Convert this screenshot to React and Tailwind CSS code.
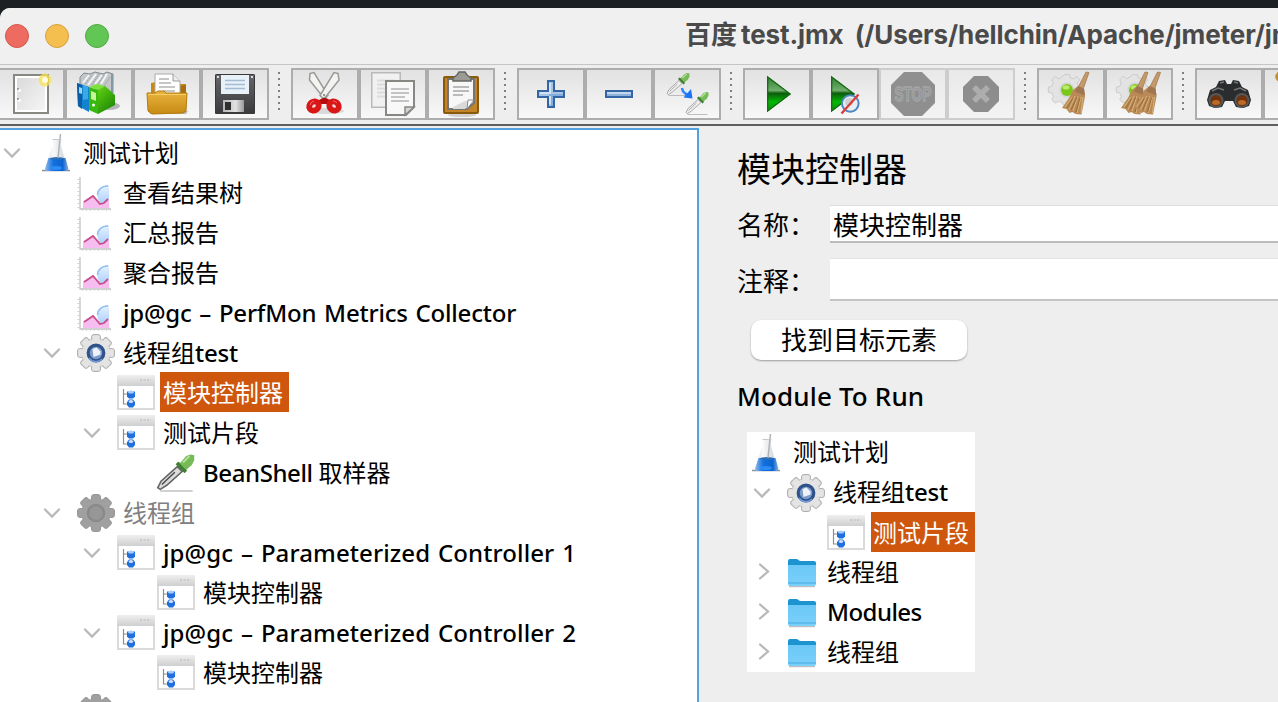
import React from "react";

const UI = "font-['Noto_Sans','Noto_Sans_CJK_SC',sans-serif]";

/* ---------- toolbar icons (64 x 48 canvas) ---------- */

const Canvas = ({ children }) => (
  <svg width="64" height="48" viewBox="0 0 64 48" className="block shrink-0">{children}</svg>
);

const NewIcon = () => (
  <Canvas>
    <rect x="15" y="5" width="34" height="38" fill="#fff" stroke="#888882" strokeWidth="2" />
    <rect x="18" y="8" width="28" height="32" fill="url(#paper)" />
    <path d="M18 18h2v2h-2zM18 28h2v2h-2z" fill="#999" />
    <circle cx="20.500" cy="20.500" r="1.500" fill="#fff" />
    <circle cx="20.500" cy="30.500" r="1.500" fill="#fff" />
    <circle cx="46" cy="10" r="6.500" fill="#f7e34f" opacity="0.75" />
    <circle cx="46" cy="10" r="3" fill="#fffbe0" />
  </Canvas>
);

const TemplatesIcon = () => (
  <Canvas>
    <ellipse cx="42" cy="36" rx="11" ry="4" fill="#777" opacity="0.5" />
    <path d="M13 7l4-4 6 1 5-2 8 2 4-2 6 2v19l-14-4-10 2-9-5z" fill="#c3c7ca" stroke="#84898c" strokeWidth="1" />
    <path d="M16 13l6-8M21 15l8-11M28 14l7-9M34 14l6-10" stroke="#f2f4f5" strokeWidth="2" />
    <path d="M18 14l7-9M25 15l7-11M31 14l6-9M37 16l6-9" stroke="#9a9fa2" strokeWidth="1" strokeDasharray="2 1" />
    <path d="M44 4l2 1v18l-2-1z" fill="#8499a6" />
    <path d="M10 13l12 4v25l-11-6z" fill="#1483cf" />
    <path d="M10 13l5 2v24l-4-3z" fill="#0b5ea5" />
    <path d="M12 17l3 1v6l-3-1z" fill="#9fd8f5" />
    <path d="M16 15l5 2v12l-5 1z" fill="#39a9e8" />
    <path d="M22 17l9 3v24l-9-4z" fill="#38b90f" />
    <path d="M24 21l5 2v8l-5-2z" fill="#c6f59c" />
    <circle cx="26.500" cy="35" r="1.500" fill="#fff" />
    <path d="M22 17l8-3 8 2-7 4z" fill="#7ee23c" />
    <path d="M31 20l7-4 10 9v10l-17 9z" fill="url(#green)" />
  </Canvas>
);

const OpenIcon = () => (
  <Canvas>
    <path d="M15 44h36l2-3H14z" fill="#777" opacity="0.5" />
    <path d="M16 13l5-1v2h30v26H16z" fill="#c98a12" />
    <path d="M45 16l6-1v22h-6z" fill="#a8700a" />
    <path d="M20 4h18l7 7v14H20z" fill="#fff" stroke="#aaa" />
    <path d="M38 4v7h7" fill="#ececec" stroke="#999" />
    <path d="M24 9h10M24 13h12M24 17h16M28 21h12" stroke="#b4b4b4" strokeWidth="1.500" />
    <path d="M12 23h8l3-2h6l2 2h21l-1 18-3 2-31 1-4-3z" fill="url(#gold)" stroke="#b57a0c" strokeWidth="1" />
    <path d="M13 24.500h38" stroke="#f5ce69" strokeWidth="1" />
  </Canvas>
);

const SaveIcon = () => (
  <Canvas>
    <rect x="12" y="4" width="40" height="40" rx="1.500" fill="url(#dark)" />
    <rect x="12.500" y="4.500" width="39" height="39" rx="1" fill="none" stroke="#39393b" />
    <rect x="18" y="5" width="28" height="19" fill="#e8f0f8" />
    <path d="M22 10.500h20M22 14.500h20M22 18.500h20" stroke="#a3bcd3" strokeWidth="1.500" />
    <rect x="14" y="6" width="2" height="2" fill="#ddd" />
    <rect x="48" y="6" width="2" height="2" fill="#ddd" />
    <rect x="20" y="30" width="21" height="12" fill="url(#steel)" />
    <rect x="22" y="32" width="6" height="8" fill="#2e2e30" />
  </Canvas>
);

const CutIcon = () => (
  <Canvas>
    <ellipse cx="33" cy="41" rx="18" ry="3" fill="#999" opacity="0.3" />
    <path d="M17 3.500l4-1 14 23-3 3-2-1.500L16.500 10z" fill="#f3f3f1" stroke="#999b96" strokeWidth="1.500" />
    <path d="M45 3.500l-4-1-14 23 3 3 2.500-1.500L46 10z" fill="#f3f3f1" stroke="#999b96" strokeWidth="1.500" />
    <circle cx="31" cy="25" r="1" fill="#777" />
    <path d="M24 31l6-3h3l6 3 1 3H23z" fill="#b50d0d" />
    <ellipse cx="21" cy="36" rx="5" ry="4.300" fill="#f3d5d5" stroke="#d91717" strokeWidth="5.800" transform="rotate(-35 21 36)" />
    <ellipse cx="41" cy="36" rx="5" ry="4.300" fill="#f3d5d5" stroke="#d91717" strokeWidth="5.800" transform="rotate(35 41 36)" />
    <path d="M17 35a5 5 0 014-4M40 31a5 5 0 014 2" stroke="#f06a6a" fill="none" />
  </Canvas>
);

const CopyIcon = () => (
  <Canvas>
    <rect x="10.750" y="2.750" width="28.500" height="34.500" fill="#f1f1f1" stroke="#b9b9b7" strokeWidth="1.500" />
    <path d="M16 10.500h18M16 14.500h18M16 18.500h10M16 22.500h10M16 26.500h10" stroke="#dcdcdc" strokeWidth="2" />
    <path d="M25 11h28v26l-8 8H25z" fill="#f8f8f8" stroke="#868884" strokeWidth="2" />
    <path d="M30 19h18M30 23h18M30 27h14M30 31h18" stroke="#c4c4c4" strokeWidth="2" />
    <path d="M53 37h-9v8z" fill="#d5d6d3" stroke="#868884" strokeWidth="1.500" />
  </Canvas>
);

const PasteIcon = () => (
  <Canvas>
    <ellipse cx="33" cy="45" rx="14" ry="2" fill="#999" opacity="0.4" />
    <rect x="15" y="7" width="34" height="36" rx="1" fill="#c28427" stroke="#8a5a0c" strokeWidth="2" />
    <path d="M19 9h26v24l-7 6H19z" fill="#f7f7f7" stroke="#737571" strokeWidth="2" />
    <path d="M24 17h16M24 21h16M24 25h10" stroke="#bababa" strokeWidth="2" />
    <path d="M24 37l12-6h8l-8 8H24z" fill="#dadada" />
    <path d="M45 30h-6l-1 9z" fill="#fff" stroke="#8b8b8b" strokeWidth="1" />
    <path d="M24 11V8l4-3 2-3h6l2 3 4 3v3z" fill="#9a9c94" stroke="#666862" strokeWidth="1.500" />
  </Canvas>
);

const PlusIcon = () => (
  <Canvas>
    <path d="M29 11h6v10h10v6H35v10h-6V27H19v-6h10z" fill="#a9c6e6" stroke="#3465a4" strokeWidth="2" />
    <path d="M31 13v21M21 23h10" stroke="#d3e2f3" strokeWidth="2" />
    <path d="M30 25h14M33 26v10" stroke="#84add9" strokeWidth="2" />
  </Canvas>
);

const MinusIcon = () => (
  <Canvas>
    <rect x="19" y="21" width="26" height="6" fill="#8fb3dc" stroke="#3465a4" strokeWidth="2" />
    <path d="M20 23h24" stroke="#c3d7ee" strokeWidth="2" />
  </Canvas>
);

/* pipette drawn tip at (0,21), bulb at (22,0) */
const Pipette = ({ dark }) => (
  <g>
    <path d="M2 22.500h20" stroke="#9a9a9a" strokeWidth="1" opacity="0.6" />
    <path d="M0.500 20.500l2-4 10-9 3 3-9.500 8.500-4 2.500z" fill={dark ? "#dcdcdc" : "#efefef"} stroke={dark ? "#666" : "#a9a9a9"} strokeWidth="1" />
    <path d="M3 18.500l8-7.500" stroke={dark ? "#444" : "#999"} strokeWidth="0.800" />
    <path d="M11.500 6l5.500 5.500 1.500-1.500-1-2L15 5.500 13 4.500z" fill="#3f7f31" />
    <path d="M14 5.500l4-4.500 3-1 2 0.500v3l-1.500 3-3.500 3z" fill="#76bb57" />
    <path d="M16 5l4-4" stroke="#b3e09a" strokeWidth="1.300" />
  </g>
);

const ToggleIcon = () => (
  <Canvas>
    <g transform="translate(11.500 3)"><Pipette /></g>
    <g transform="translate(30.500 22)"><Pipette /></g>
    <path d="M27 18c0.500 4 3 6 6.500 7" stroke="#2f86ff" strokeWidth="2.500" fill="none" />
    <path d="M36 19l1.500 9.500-9-1z" fill="#1b74f5" />
  </Canvas>
);

const PlayIcon = () => (
  <Canvas>
    <path d="M22 6l24 18-24 18z" fill="url(#play)" />
    <path d="M22.700 7l22.300 17-22.300 17z" fill="none" stroke="#176a17" strokeWidth="1.300" />
  </Canvas>
);

const PlayNoPauseIcon = () => (
  <Canvas>
    <path d="M18 6l24 18-24 18z" fill="url(#play)" />
    <path d="M18.700 7l22.300 17-22.300 17z" fill="none" stroke="#176a17" strokeWidth="1.300" />
    <circle cx="37.300" cy="33.500" r="8.300" fill="#e9eef3" stroke="#4b87c2" strokeWidth="2" />
    <circle cx="36" cy="32" r="4" fill="#d0d0d0" />
    <path d="M28.500 43.500l17-19" stroke="#dc3b3b" strokeWidth="2.300" />
  </Canvas>
);

const StopIcon = () => (
  <Canvas>
    <path d="M23 2h18l13 13v18L41 46H23L10 33V15z" fill="#8f8f8f" />
    <text transform="translate(13.500 31) scale(0.680 1)" fill="#959595" stroke="#a6a6a6" strokeWidth="1.300" className="font-['Liberation_Sans',sans-serif] text-[20px] font-bold">STOP</text>
  </Canvas>
);

const ShutdownIcon = () => (
  <Canvas>
    <path d="M25 6h14l11 11v14L39 42H25L14 31V17z" fill="#8d8d8d" />
    <path d="M25 17l14 14M39 17L25 31" stroke="#adadad" strokeWidth="5.500" />
  </Canvas>
);

const PaleGear = () => (
  <g transform="translate(4.200 3) scale(0.850)">
    <path d="M25 3h6l1 4 4 1 3-3 4 4-3 4 2 4 4 1v6l-4 1-2 4 2 4-4 4-4-3-4 2-1 4h-5l-2-4-4-1-4 2-4-4 2-4-2-4-4-1v-6l4-1 2-4-2-4 4-4 4 3 4-2z" fill="#e3e3e3" stroke="#c6c6c6" strokeWidth="1" transform="translate(0 -1) scale(1 0.980)" />
    <circle cx="28" cy="20" r="9" fill="#d6d6d6" />
    <circle cx="28" cy="20" r="7" fill="#7cc61c" />
    <ellipse cx="27" cy="17" rx="4" ry="2.500" fill="#b9ec6b" />
  </g>
);

/* broom with the handle top at (27,0) and bristles reaching y=43 */
const Broom = () => (
  <g>
    <path d="M25 0l3 0.500-6 17-5-2z" fill="#c49a6c" stroke="#9b7142" strokeWidth="0.700" />
    <path d="M17 14l6 2.500 1 8-3.500 18-6-0.500-3-2-3 1-3-4-4.500-1 7-10 4-8z" fill="#b98a55" />
    <path d="M17 14l6 2.500 1 7-10-4z" fill="#a07650" />
    <path d="M11 25L4 35M14 24L8 38M17 24l-5 15M20 25l-4 16M22 25l-2 16" stroke="#dcb27c" strokeWidth="1" />
    <path d="M12 26L6 36M16 25l-6 13M19 26l-4 14" stroke="#87602f" strokeWidth="0.700" />
  </g>
);

const ClearIcon = () => (
  <Canvas>
    <PaleGear />
    <g transform="translate(22 2)"><Broom /></g>
  </Canvas>
);

const ClearAllIcon = () => (
  <Canvas>
    <PaleGear />
    <g transform="translate(13 2)"><Broom /></g>
    <g transform="translate(25.500 2)"><Broom /></g>
  </Canvas>
);

const SearchIcon = () => (
  <Canvas>
    <path d="M10 30l3-10 6-3 3-6 6-1 2 4h4l2-4 6 1 3 6 6 3 3 10-2 6-6 2-7-1-3-6h-8l-3 6-7 1-6-2z" fill="#2a2c2d" />
    <path d="M15 21l6-3 6 2M37 20l6-2 6 3M23 13l4-1M37 12l4 1" stroke="#737778" strokeWidth="1.500" fill="none" />
    <circle cx="19" cy="30.500" r="7.500" fill="#555859" />
    <circle cx="45" cy="30.500" r="7.500" fill="#555859" />
    <circle cx="19" cy="30.500" r="5.500" fill="#6d330f" />
    <circle cx="45" cy="30.500" r="5.500" fill="#6d330f" />
    <ellipse cx="19" cy="32.500" rx="4" ry="2.500" fill="#bd6a26" />
    <ellipse cx="45" cy="32.500" rx="4" ry="2.500" fill="#bd6a26" />
  </Canvas>
);

const ResetIcon = () => (
  <Canvas>
    <path d="M20 2c-6-1-9 3-8 6 1 2 3 2 3 5v9" stroke="#c28f32" strokeWidth="3" fill="none" />
  </Canvas>
);

const Defs = () => (
  <svg width="0" height="0" className="absolute">
    <defs>
      <linearGradient id="paper" x1="0" y1="0" x2="1" y2="1">
        <stop offset="0" stopColor="#dadada" /><stop offset="1" stopColor="#f5f5f5" />
      </linearGradient>
      <linearGradient id="green" x1="0" y1="0" x2="0.600" y2="1">
        <stop offset="0" stopColor="#62d312" /><stop offset="1" stopColor="#1f8a06" />
      </linearGradient>
      <linearGradient id="gold" x1="0" y1="0" x2="0" y2="1">
        <stop offset="0" stopColor="#eab440" /><stop offset="1" stopColor="#c68a12" />
      </linearGradient>
      <linearGradient id="dark" x1="0" y1="0" x2="0" y2="1">
        <stop offset="0" stopColor="#68686c" /><stop offset="1" stopColor="#39393b" />
      </linearGradient>
      <linearGradient id="steel" x1="0" y1="0" x2="1" y2="0">
        <stop offset="0" stopColor="#b5b5b5" /><stop offset="0.600" stopColor="#e2e2e2" /><stop offset="1" stopColor="#999" />
      </linearGradient>
      <linearGradient id="play" x1="0" y1="0" x2="0" y2="1">
        <stop offset="0" stopColor="#2f7a2f" /><stop offset="0.400" stopColor="#6fae6c" />
        <stop offset="0.480" stopColor="#0c5c0c" /><stop offset="0.720" stopColor="#04b804" /><stop offset="1" stopColor="#0b8a0b" />
      </linearGradient>
      <linearGradient id="bar" x1="0" y1="0" x2="0" y2="1">
        <stop offset="0" stopColor="#efefef" /><stop offset="1" stopColor="#cfcfd1" />
      </linearGradient>
      <linearGradient id="liquid" x1="0" y1="0" x2="1" y2="0">
        <stop offset="0" stopColor="#8db8ec" /><stop offset="0.350" stopColor="#1571e0" />
        <stop offset="0.750" stopColor="#0a63cf" /><stop offset="1" stopColor="#89b0e2" />
      </linearGradient>
      <linearGradient id="glass" x1="0" y1="0" x2="1" y2="0">
        <stop offset="0" stopColor="#d5d9dc" /><stop offset="0.350" stopColor="#fafafa" /><stop offset="1" stopColor="#c9ced2" />
      </linearGradient>
      <linearGradient id="folder" x1="0" y1="0" x2="0" y2="1">
        <stop offset="0" stopColor="#6cc8f7" /><stop offset="1" stopColor="#7ad0f9" />
      </linearGradient>
      <linearGradient id="sky" x1="0" y1="0" x2="0" y2="1">
        <stop offset="0" stopColor="#e9f3ff" /><stop offset="1" stopColor="#a9cffb" />
      </linearGradient>
    </defs>
  </svg>
);

/* ---------- tree icons (40 x 40 canvas) ---------- */

const Tile = ({ children }) => (
  <svg width="40" height="40" viewBox="0 0 40 40" className="block shrink-0">{children}</svg>
);

const Flask = () => (
  <Tile>
    <path d="M6 38.500h28" stroke="#8d9198" strokeWidth="1.500" />
    <path d="M17 7h8v6l2 8 5 16-2 2H11l-2-2 5-16 3-8z" fill="url(#glass)" />
    <path d="M12.500 26h17l3 11-2 2H11l-2-2z" fill="url(#liquid)" />
    <ellipse cx="21" cy="26.500" rx="7" ry="1.500" fill="#2d6fb5" />
    <ellipse cx="20" cy="36" rx="6" ry="2" fill="#2b8cf8" />
    <path d="M24.500 2l-2.500 24" stroke="#aeb3b6" strokeWidth="1.500" />
    <path d="M16.500 7.500h9" stroke="#c4c8cc" strokeWidth="1" />
  </Tile>
);

const Chart = () => (
  <Tile>
    <path d="M33 13c-7 0-12 4-12 9 0 4 2 8 4 10l8-5z" fill="url(#sky)" />
    <path d="M32 14c-6-0.500-10.500 4-10.500 9" fill="none" stroke="#8fbcf2" strokeWidth="1.500" />
    <path d="M7 30l10-7 7 8 3 1 6-5v9H7z" fill="#f8bdf0" />
    <path d="M8 30l9-6 7 8 4-1 4-4" fill="none" stroke="#c84f88" strokeWidth="1.800" />
    <path d="M4 5v32h31" fill="none" stroke="#c2c2c2" strokeWidth="1.300" />
    <path d="M2.500 7v30" stroke="#cfcfcf" strokeWidth="2" strokeDasharray="1 3" />
    <path d="M6 38h29" stroke="#cfcfcf" strokeWidth="1.500" strokeDasharray="1 3" />
  </Tile>
);

const TEETH = [0, 45, 90, 135, 180, 225, 270, 315];

const Gear = ({ off }) => (
  <Tile>
    {TEETH.map((a) => (
      <rect key={a} x="15.500" y="2.500" width="9" height="9" rx="2.500" fill={off ? "#a0a0a0" : "#dedede"} stroke={off ? "#989898" : "#b0b0b0"} strokeWidth="1" transform={`rotate(${a} 20 21)`} />
    ))}
    <circle cx="20" cy="21" r="14.500" fill={off ? "#a0a0a0" : "#dfdfdf"} stroke={off ? "#999999" : "#bcbcbc"} strokeWidth="0.800" />
    {TEETH.map((a) => (
      <rect key={a} x="16.500" y="4" width="7" height="8" fill={off ? "#a0a0a0" : "#e4e4e4"} transform={`rotate(${a} 20 21)`} />
    ))}
    {off ? (
      <circle cx="20" cy="21" r="8" fill="#979797" stroke="#8a8a8a" strokeWidth="2.500" />
    ) : (
      <g>
        <circle cx="20" cy="21" r="7.800" fill="#7f9cc9" stroke="#2f528b" strokeWidth="3.200" />
        <path d="M16.500 17l4-1.500 4 4v3l-7 2.500z" fill="#eef3fa" />
        <path d="M13 26a8.500 8.500 0 0013 1" fill="none" stroke="#6f9ad8" strokeWidth="1.500" />
      </g>
    )}
  </Tile>
);

const Window = () => (
  <Tile>
    <rect x="2" y="4" width="36" height="33" fill="#fff" stroke="#dadadb" strokeWidth="2" />
    <rect x="1" y="3" width="38" height="11" fill="url(#bar)" />
    <path d="M24 8h11" stroke="#c2c2c4" strokeWidth="1.500" strokeDasharray="2 1.500" />
    <path d="M7.500 17v15H12M7.500 22H12" fill="none" stroke="#8f8f8f" strokeWidth="1.200" />
    <path d="M11 19.500h8v5l-2 2h-4l-2-2z" fill="#1f6fe0" />
    <ellipse cx="15" cy="20" rx="3" ry="1.500" fill="#a9cbf8" />
    <path d="M11 30l2-2.500h4l2 2.500v3l-2 2.500h-4l-2-2.500z" fill="#1f6fe0" />
    <ellipse cx="15" cy="29.500" rx="2.200" ry="1.500" fill="#cfe1fa" />
  </Tile>
);

const Dropper = () => (
  <Tile>
    <g transform="translate(1 2.500) scale(1.620)"><Pipette dark /></g>
  </Tile>
);

const Folder = () => (
  <svg width="30" height="40" viewBox="0 0 30 40" className="block shrink-0">
    <path d="M2 34.500h26" stroke="#999" strokeWidth="1.500" opacity="0.600" />
    <path d="M1 9q0-2 2-2h7l3 2h14q2 0 2 2v10H1z" fill="#1c94cf" />
    <path d="M1 13h28v19q0 2-2 2H3q-2 0-2-2z" fill="url(#folder)" />
    <path d="M1 31h28" stroke="#47a9df" strokeWidth="1" />
  </svg>
);

const Down = () => (
  <svg width="24" height="24" viewBox="0 0 24 24" className="block shrink-0">
    <path d="M5 9.500l7 7 7-7" fill="none" stroke="#b9b9b9" strokeWidth="2.300" strokeLinecap="round" />
  </svg>
);

const Right = () => (
  <svg width="24" height="24" viewBox="0 0 24 24" className="block shrink-0">
    <path d="M9 4.500l8 7-8 7" fill="none" stroke="#b9b9b9" strokeWidth="2.300" strokeLinecap="round" />
  </svg>
);

/* ---------- toolbar ---------- */

const GROUPS = [
  [[NewIcon], [TemplatesIcon], [OpenIcon], [SaveIcon]],
  [[CutIcon], [CopyIcon], [PasteIcon]],
  [[PlusIcon], [MinusIcon], [ToggleIcon]],
  [[PlayIcon], [PlayNoPauseIcon], [StopIcon, true], [ShutdownIcon, true]],
  [[ClearIcon], [ClearAllIcon]],
  [[SearchIcon], [ResetIcon]],
];

const Grip = () => (
  <div className="mr-[11px] ml-[9px] flex w-0.5 shrink-0 flex-col gap-1">
    {[0, 1, 2, 3, 4, 5, 6].map((n) => (
      <i key={n} className="block h-0.5 w-0.5 bg-[#808080]" />
    ))}
  </div>
);

const Toolbar = () => (
  <div className="flex h-[61px] shrink-0 items-start border-b-2 border-[#5f5f5f] bg-[#eeeeee]">
    <div className="-ml-[3px] flex shrink-0 items-start pt-[3px]">
      {GROUPS.map((group, g) => (
        <React.Fragment key={g}>
          {g > 0 && <div className="pt-1"><Grip /></div>}
          {group.map(([Icon, off], i) => (
            <button key={i} className={`block h-[52px] w-[68px] shrink-0 border-2 bg-linear-to-b ${off ? "border-[#cdcdcd] from-[#e9e9e9] to-[#f3f3f3]" : "border-[#adadad] from-[#e2e2e2] to-[#f8f8f8]"}`}>
              <Icon />
            </button>
          ))}
        </React.Fragment>
      ))}
    </div>
  </div>
);

/* ---------- trees ---------- */

const INDENT = ["pl-0", "pl-[40px]", "pl-[80px]", "pl-[120px]"];

const Latin = ({ children, fit = "tracking-[-0.2px]" }) => (
  <span className={`font-medium ${fit}`}>{children}</span>
);

const PARAM = "tracking-[0.1px] [word-spacing:1.5px]";

const TREE = [
  [0, Flask, "测试计划", "open"],
  [1, Chart, "查看结果树"],
  [1, Chart, "汇总报告"],
  [1, Chart, "聚合报告"],
  [1, Chart, <Latin fit="tracking-[-0.2px] [word-spacing:1.7px]">jp@gc – PerfMon Metrics Collector</Latin>],
  [1, Gear, <>线程组<Latin>test</Latin></>, "open"],
  [2, Window, "模块控制器", "selected"],
  [2, Window, "测试片段", "open"],
  [3, Dropper, <><Latin fit="tracking-[-0.4px]">BeanShell </Latin>取样器</>],
  [1, Gear, "线程组", "open off"],
  [2, Window, <Latin fit={PARAM}>jp@gc – Parameterized Controller 1</Latin>, "open"],
  [3, Window, "模块控制器"],
  [2, Window, <Latin fit={PARAM}>jp@gc – Parameterized Controller 2</Latin>, "open"],
  [3, Window, "模块控制器"],
  [1, Gear, "", "off"],
];

const TreeRow = ({ level, Icon, label, state = "" }) => {
  const off = state.includes("off");
  const selected = state === "selected";
  return (
    <li className={`flex h-10 shrink-0 items-center ${INDENT[level]}`}>
      <span className="w-6 shrink-0">{state.includes("open") && <Down />}</span>
      <span className="ml-3 shrink-0"><Icon off={off} /></span>
      <span className={`ml-1 h-10 pr-1.5 pl-[3px] leading-[42px] whitespace-pre ${selected ? "bg-[#ce560d] text-white" : off ? "text-[#808080]" : "text-black"}`}>{label}</span>
    </li>
  );
};

const ModuleTree = () => (
  <ul className="mt-[15px] ml-[10px] h-[240px] w-[228px] overflow-hidden bg-white text-[24px]">
    <li className="-ml-px flex h-10 items-center">
      <Flask /><span className="ml-[7px] leading-[42px]">测试计划</span>
    </li>
    <li className="flex h-10 items-center pl-[3px]">
      <Down /><span className="ml-3"><Gear /></span>
      <span className="ml-[7px] leading-[42px]">线程组<Latin>test</Latin></span>
    </li>
    <li className="flex h-10 items-center pl-[79px]">
      <Window /><span className="ml-[5px] h-10 flex-1 bg-[#ce560d] pl-0.5 leading-[42px] text-white">测试片段</span>
    </li>
    {["线程组", "Modules", "线程组"].map((name, i) => (
      <li key={i} className="flex h-10 items-center pl-1">
        <Right /><span className="ml-3"><Folder /></span>
        <span className="ml-[10px] leading-[42px]">{name === "Modules" ? <Latin fit="tracking-[-0.55px]">{name}</Latin> : name}</span>
      </li>
    ))}
  </ul>
);

export default function App() {
  return (
    <div className={`flex h-[702px] w-[1278px] flex-col overflow-hidden bg-[#1c2023] ${UI}`}>
      <Defs />
      <div className="h-2 shrink-0" />
      <div className="flex min-h-0 flex-1 flex-col overflow-hidden rounded-tl-[10px] bg-[#eeeeee]">
        <header className="flex h-[57px] shrink-0 items-center border-b border-[#c5c5c5] bg-[#f0f0f0]">
          <div className="flex w-[685px] shrink-0 gap-4 pl-[5px]">
            <i className="block h-6 w-6 rounded-full border border-[#d3584d] bg-[#ed6b60]" />
            <i className="block h-6 w-6 rounded-full border border-[#d8a03c] bg-[#f5bf50]" />
            <i className="block h-6 w-6 rounded-full border border-[#51a843] bg-[#62c655]" />
          </div>
          <h1 className="-mt-0.5 font-['Inter','Noto_Sans_CJK_SC',sans-serif] text-[26px] leading-[36px] font-bold whitespace-pre text-[#4a4a4a]">
            百度<span className="ml-1 tracking-[-0.1px] [word-spacing:5px]">test.jmx (/Users/hellchin/Apache/jmeter/jm</span>
          </h1>
        </header>
        <Toolbar />
        <main className="flex min-h-0 flex-1 pt-0.5">
          <section className="w-[699px] shrink-0 overflow-hidden border-t-2 border-r-2 border-[#56a0de] bg-white pt-0.5 text-[24px]">
            <ul className="flex flex-col">
              {TREE.map(([level, Icon, label, state], i) => (
                <TreeRow key={i} level={level} Icon={Icon} label={label} state={state} />
              ))}
            </ul>
          </section>
          <section className="min-w-0 flex-1 pt-4 pl-[38px] text-[26px] text-black">
            <h2 className="h-[50px] text-[34px] leading-[50px]">模块控制器</h2>
            <div className="mt-[11px] flex h-[40px] items-center">
              <label className="w-[93px] shrink-0">名称：</label>
              <div className="-mt-[2px] h-[38px] flex-1 border-t border-b-2 border-t-[#dedede] border-b-[#bcbcbc] bg-white pl-[3px] leading-[39px]">模块控制器</div>
            </div>
            <div className="mt-[13px] flex h-[43px] items-center">
              <label className="w-[93px] shrink-0 pt-[3px]">注释：</label>
              <div className="h-[43px] flex-1 border-t border-b-2 border-t-[#e2e2e2] border-b-[#c4c4c4] bg-white" />
            </div>
            <button className="mt-[19px] ml-[14px] block h-10 w-[216px] rounded-[10px] bg-white leading-[37px] shadow-[0_1px_2px_rgba(0,0,0,0.35)]">找到目标元素</button>
            <div className="mt-[17px] h-10 leading-[38px]"><Latin fit="tracking-[0.15px]">Module To Run</Latin></div>
            <ModuleTree />
          </section>
        </main>
      </div>
    </div>
  );
}
